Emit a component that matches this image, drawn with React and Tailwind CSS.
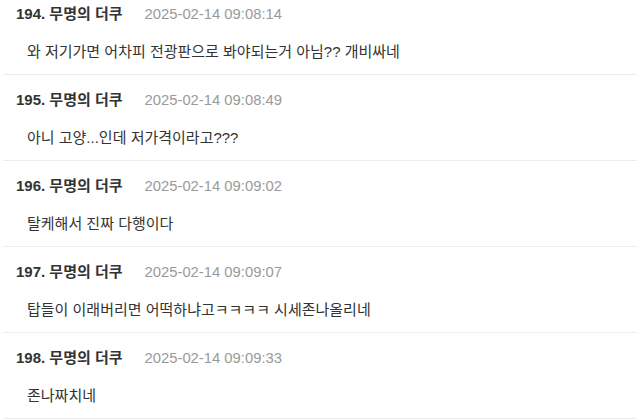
import React from "react";

const items = [
  { n: 194, t: "2025-02-14 09:08:14", body: "와 저기가면 어차피 전광판으로 봐야되는거 아님?? 개비싸네" },
  { n: 195, t: "2025-02-14 09:08:49", body: "아니 고양...인데 저가격이라고???" },
  { n: 196, t: "2025-02-14 09:09:02", body: "탈케해서 진짜 다행이다" },
  { n: 197, t: "2025-02-14 09:09:07", body: "탑들이 이래버리면 어떡하냐고ㅋㅋㅋㅋ 시세존나올리네" },
  { n: 198, t: "2025-02-14 09:09:33", body: "존나짜치네" },
];

export default function App() {
  return (
    <div
      className="w-[640px] h-[419px] overflow-hidden bg-white"
      style={{ fontFamily: '"Liberation Sans", "Noto Sans CJK KR", sans-serif' }}
    >
      <div className="-mt-[11px] flex flex-col">
        {items.map((it) => (
          <div key={it.n} className="flex flex-col">
            <div className="pt-[15px] pb-[12px] flex flex-col">
              <div className="flex items-center h-[20px] pl-[16px] gap-[22px]">
                <span className="text-[15px] font-bold text-[#333333] leading-[20px]">
                  {it.n}. 무명의 더쿠
                </span>
                <span className="text-[14.8px] text-[#9a9a9a] leading-[20px]">{it.t}</span>
              </div>
              <div className="mt-[18px] h-[20px] pl-[27px] text-[15px] text-[#333333] leading-[20px] whitespace-nowrap">
                {it.body}
              </div>
            </div>
            <div className="mx-[3px] h-px bg-[#ececec]" />
          </div>
        ))}
      </div>
    </div>
  );
}
